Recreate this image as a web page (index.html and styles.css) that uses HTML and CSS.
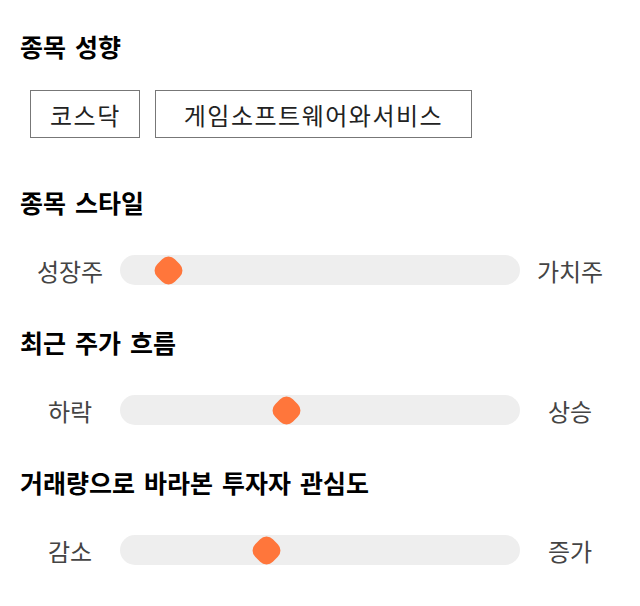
FILE: index.html
```html
<!DOCTYPE html>
<html lang="ko">
<head>
<meta charset="utf-8">
<link rel="stylesheet" href="styles.css">
</head>
<body>
<section class="sec sec-first">
  <h2 class="title">종목 성향</h2>
  <div class="tags">
    <span class="tag">코스닥</span>
    <span class="tag tag-wide">게임소프트웨어와서비스</span>
  </div>
</section>
<section class="sec">
  <h2 class="title">종목 스타일</h2>
  <div class="slider">
    <span class="lbl">성장주</span>
    <div class="track"><span class="thumb" style="left:34px"></span></div>
    <span class="lbl">가치주</span>
  </div>
</section>
<section class="sec">
  <h2 class="title">최근 주가 흐름</h2>
  <div class="slider">
    <span class="lbl">하락</span>
    <div class="track"><span class="thumb" style="left:152px"></span></div>
    <span class="lbl">상승</span>
  </div>
</section>
<section class="sec">
  <h2 class="title">거래량으로 바라본 투자자 관심도</h2>
  <div class="slider">
    <span class="lbl">감소</span>
    <div class="track"><span class="thumb" style="left:132px"></span></div>
    <span class="lbl">증가</span>
  </div>
</section>
</body>
</html>
```
FILE: styles.css
```css
html, body {
  margin: 0;
  padding: 0;
  background: #fff;
}
body {
  padding: 0 20px;
  font-family: "Noto Sans CJK KR", "Noto Sans", sans-serif;
  color: #111;
}
.sec {
  margin-top: 42px;
}
.sec-first {
  margin-top: 31px;
}
.sec + .sec:nth-of-type(2) {
  margin-top: 49px;
}
.title {
  margin: 0;
  font-size: 25px;
  line-height: 30px;
  font-weight: 700;
  word-spacing: 2px;
  color: #000;
}
.tags {
  display: flex;
  gap: 15px;
  margin: 29px 0 0 10px;
}
.tag {
  box-sizing: border-box;
  height: 48px;
  padding: 0 18px 0 19px;
  border: 1px solid #777;
  display: flex;
  align-items: center;
  justify-content: center;
  font-size: 24px;
  letter-spacing: 1.5px;
  color: #222;
}
.tag-wide {
  padding: 0 28px;
}
.slider {
  display: flex;
  align-items: center;
  margin-top: 38px;
  height: 30px;
}
.lbl {
  width: 100px;
  text-align: center;
  font-size: 24px;
  color: #444;
  flex: none;
}
.track {
  position: relative;
  width: 400px;
  height: 30px;
  border-radius: 15px;
  background: #eeeeee;
  flex: none;
}
.thumb {
  position: absolute;
  top: 1px;
  width: 28px;
  height: 28px;
}
.thumb::before {
  content: "";
  position: absolute;
  left: 1.5px;
  top: 1.5px;
  width: 25px;
  height: 25px;
  border-radius: 9px;
  background: #ff763b;
  transform: rotate(45deg);
}
```
